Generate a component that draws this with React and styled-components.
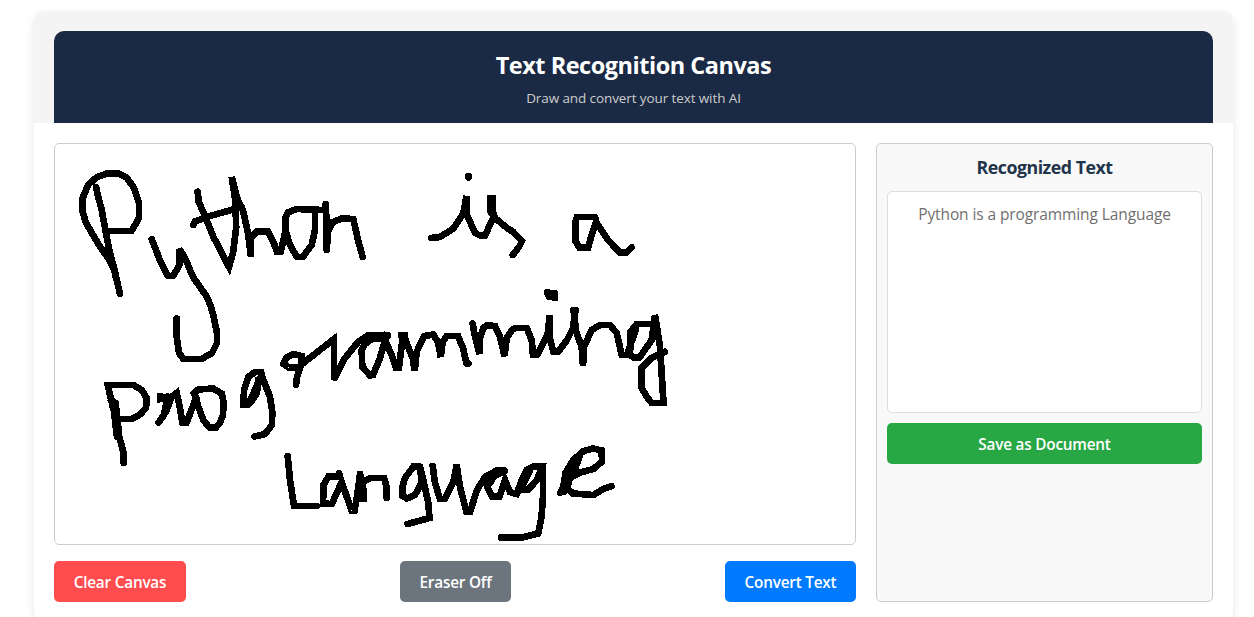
import React from "react";
import styled, { createGlobalStyle } from "styled-components";

const GlobalStyle = createGlobalStyle`
  * { box-sizing: border-box; }
  html, body { margin: 0; height: 100%; overflow: hidden; }
  body {
    background: #ffffff;
    font-family: "Open Sans", "Noto Sans", sans-serif;
    font-size: 16px;
  }
`;

const Page = styled.main`
  height: 617px;
  padding: 11px 21px 0 34px;
  overflow: hidden;
`;

const Card = styled.section`
  height: 611px;
  border-radius: 10px;
  background: #ffffff;
  box-shadow: 0 4px 10px rgba(0, 0, 0, 0.1);
`;

const HeaderWrap = styled.div`
  padding: 20px 20px 0;
  background: #f4f4f4;
  border-radius: 10px 10px 0 0;
`;

const Header = styled.header`
  height: 92px;
  padding-top: 18px;
  border-radius: 10px 10px 0 0;
  background: #1b2a44;
  text-align: center;
`;

const Title = styled.h1`
  margin: 0;
  font-size: 23.5px;
  line-height: 33px;
  font-weight: 700;
  letter-spacing: -0.48px;
  color: #ffffff;
`;

const Subtitle = styled.p`
  margin: 6px 0 0;
  font-size: 13.5px;
  line-height: 20px;
  letter-spacing: -0.1px;
  color: #cccccc;
`;

const Body = styled.div`
  display: grid;
  grid-template-columns: 802px 1fr;
  gap: 20px;
  padding: 20px;
`;

const Workspace = styled.div`
  display: flex;
  flex-direction: column;
  gap: 16px;
`;

const DrawingArea = styled.div`
  height: 402px;
  border: 1px solid #cccccc;
  border-radius: 5px;
  background: #ffffff;
  overflow: hidden;
`;

const Ink = styled.svg`
  display: block;
  width: 800px;
  height: 400px;
  fill: none;
  stroke: #000000;
  stroke-width: 6.7px;
  stroke-linecap: round;
  stroke-linejoin: miter;
  stroke-miterlimit: 3;
`;

const Toolbar = styled.div`
  display: flex;
  justify-content: space-between;
`;

const Button = styled.button`
  width: ${(p) => p.$width};
  height: 41px;
  padding: 1px 0 0;
  border: 0;
  border-radius: 5px;
  background: ${(p) => p.$color};
  color: #ffffff;
  font-family: inherit;
  font-size: 15.3px;
  font-weight: 600;
  letter-spacing: -0.2px;
  white-space: nowrap;
  cursor: pointer;
`;

const Panel = styled.aside`
  display: flex;
  flex-direction: column;
  padding: 10px;
  border: 1px solid #cccccc;
  border-radius: 5px;
  background: #f9f9f9;
  text-align: center;
`;

const PanelTitle = styled.h2`
  margin: 0 0 10px;
  font-size: 17.8px;
  line-height: 27px;
  font-weight: 700;
  letter-spacing: -0.5px;
  color: #22344a;
`;

const Output = styled.div`
  height: 222px;
  margin-bottom: 10px;
  padding: 10px;
  border: 1px solid #dddddd;
  border-radius: 5px;
  background: #ffffff;
  color: #6f6f6f;
  font-size: 15.5px;
  line-height: 25px;
  letter-spacing: -0.1px;
`;

const strokes = [
  // Python
  "96,187 98,196 101.7,210 106.7,237 110,253 115,272 120,294",
  "114,270 108,258 99,245 86,223 82.7,211.7 82.7,198 88,185 97,177 107,173.5 118,173.5 127,178 134,188 139,203 139,218 131.5,231 107,231",
  "108,247 113,264 116,278",
  "151.7,239 161,263 168,276 173,276 179.5,265 179.5,249 185,258 193,277 200,287 207,297 211,307 214,318 217,333 217,343 212,353 201.5,359 183.5,359 179,353 176.7,337 176.7,318.5",
  "197.7,191.7 198.7,201.7 206.7,220 213.3,236.7 229,267 233,253 236.2,227 235.3,200 231.7,177 236.7,197 243.3,211.7 248,233 251,257 251,238 256.7,231.7 268,231.7 273.3,241.7 277,251.7 280.7,251.7 285,233 285,218 288,212.3 296.7,209 323,210",
  "193.5,225 195,221.5 210,216 241.7,207",
  "286,219 286,232 290,245 297,257 302.7,257 311.7,245 315,230 315,213",
  "325.7,204 326.7,225 326.7,250",
  "326.7,250 328,232 333,222 341.7,218.5 353.3,219 358,240 362.7,257",
  // is a
  "468.6,176 468.6,177.5",
  "431,238 440,237 453.5,228.5 463.3,213.3 466.5,196 467,215 475,233 480,235.5 485,235.5 494,216 490,211 490,198 493,198 493,212 495,218 506.7,227.7 513.3,232 522,241 519,247 512.7,255",
  "596,219 595,217 577,217 575.7,221 575.7,241.7 579.5,247.5 588,248 591.7,235 596,222 608,240 620,252.7 626,252.7 631.7,247.3",
  // prog
  "113,408 107.7,385 133.5,385 141.7,390 146.7,398 146,408 140,414.5 131.7,419 119,419",
  "111,400 115.5,403 118,424 119,436 123.3,451.7 123.7,463",
  "113,403 117,437",
  "160,396 160,399 166,397 166,405 164,415 158.5,422.5",
  "166,412 171.7,396.7 176.7,393 179,403 182.5,423 186.5,423 196,398 194,393.3 198.3,389.5 213,388.5 221.7,393.5 223.5,402 223,415 219.5,423.5 216,427.3 209.3,427.3 203.3,420 198.3,406.7 196,397",
  "258,380 257,393 251,401.7 248,405 243.5,405 244,390 248.3,377 255,372 261,372 263.3,380 270,396.7 272.3,411.7 272,425 265,434 254.5,436.5",
  "261,376 254,392 249,402",
  // ramming
  "296,385 297,376.7 301.7,363.3 301.5,356 293.5,354 286,358 283.5,364 288.5,367.5 298,367.5 305,361.7 334,339 334,380 345,358 358.3,341.7 368,335.5 388,335.5",
  "382,338 372,339 365,344 361.7,350 362.3,366.7 370,375.5 373,375 380,358 385,340 391.7,355 396,367.5 399,367.5 401.5,347 403.3,334 406.7,343 412.7,358 414.7,371 416.7,351.7 424.3,336 433.3,334.5 438.3,343 440.7,357 442.7,341.7 446.7,336 458,336 463,348 466.5,363.3 468.5,363.5",
  "387,335 385,344",
  "401,335 405,335",
  "472.7,323.5 475,336.7 479.5,354 480,338 483.3,328 487,325.5 495,326 500,336.7 504.5,356 506.7,338 512,330 516,328 526.7,328 531.7,340 533,355 537,355 547.5,335 549.7,315.5 549.5,336.7 553.3,351.7 558,352 567,340 573.5,327 574.5,310.5 575.5,330 581.7,347 583,366 584,346.7 591.7,330 600,325 610,325 616.7,333 621.7,355 627,355 636,329",
  "573,310.5 576,310.5",
  "650,324 636.7,324 630.7,331.7 630,355 634,357.5 639.5,357.5 651.7,340 655,315 660,346.7 663.5,403 651.7,403 646.7,396.7 641.7,388 641.7,368 651.7,358 665,351.7",
  "547,292.5 554.5,293.5 554.5,297.5 549,296.5 547,292.5",
  // Language
  "287.7,456 290,480 294,506 316.5,506",
  "339,473 340,476.5 328.3,476.7 323.5,485 323,503.5 331.7,504 341.7,482 351.5,510.5 354.5,510.5 357,497 360,474 363.5,490 363.7,502 361,483 370,478 384,478 386.7,487 386.7,498",
  "360,474 360,492",
  "420,466.7 413.3,466.7 405,478 402.5,486.7 402.7,496 407,498.5 415,495 421.7,482 420,466.7 423.3,480 428.3,503 429.5,518 407.5,524",
  "432.7,466 435,483 440,499 445,499 453.3,481.7 456.7,465 460,487 466.5,512 470,512 477,490 485,477 496.7,470.5 504,470.5",
  "505,471 496,475 488,480 487.5,488 492,496.5 499.5,496.5 505,480 510,492 516.7,494 521.7,480 526.7,470 533.3,466.5 542,466.7 537,480 528.3,489.5 523,490 523,481",
  "496,472 490,483",
  "530,471 523,484",
  "543,468 543,496.7 541.5,516.7 538.3,533.5 521.7,537.5 501,537.5",
  "560,493 563.3,487 565.5,473 573.3,460 583.5,451 593.3,448.5 601.7,450.5 602,461.7 593.3,469 580,472.5 570,478 567,488 573,493.5 593.3,495 603.3,489 611.5,486",
  "580,455 574,472 567,480 564,492",
  "576,459 569,474",
];

function Handwriting() {
  return (
    <Ink viewBox="55 144 800 400" shapeRendering="crispEdges" aria-hidden="true">
      {strokes.map((points, i) => (
        <polyline key={i} points={points} />
      ))}
    </Ink>
  );
}

export default function App() {
  return (
    <>
      <GlobalStyle />
      <Page>
        <Card>
          <HeaderWrap>
            <Header>
              <Title>Text Recognition Canvas</Title>
              <Subtitle>Draw and convert your text with AI</Subtitle>
            </Header>
          </HeaderWrap>
          <Body>
            <Workspace>
              <DrawingArea>
                <Handwriting />
              </DrawingArea>
              <Toolbar>
                <Button $width="132px" $color="#ff4d4f">Clear Canvas</Button>
                <Button $width="111px" $color="#6c757d">Eraser Off</Button>
                <Button $width="131px" $color="#007bff">Convert Text</Button>
              </Toolbar>
            </Workspace>
            <Panel>
              <PanelTitle>Recognized Text</PanelTitle>
              <Output>Python is a programming Language</Output>
              <Button $width="100%" $color="#28a745">Save as Document</Button>
            </Panel>
          </Body>
        </Card>
      </Page>
    </>
  );
}
